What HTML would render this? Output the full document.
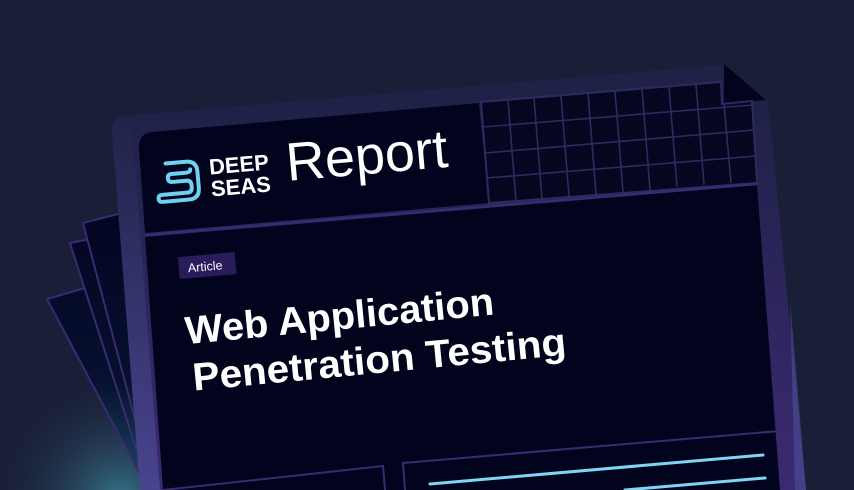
<!DOCTYPE html>
<html><head><meta charset="utf-8"><style>
html,body{margin:0;padding:0;background:#1a1f38;}
svg{display:block}
</style></head><body>
<svg width="854" height="490" viewBox="0 0 854 490" xmlns="http://www.w3.org/2000/svg">
<defs>
<radialGradient id="glow" cx="120" cy="500" r="130" gradientUnits="userSpaceOnUse">
<stop offset="0" stop-color="#3a7f93" stop-opacity="0.9"/>
<stop offset="1" stop-color="#1a1f38" stop-opacity="0"/>
</radialGradient>
<linearGradient id="paper" x1="0" y1="100" x2="0" y2="490" gradientUnits="userSpaceOnUse">
<stop offset="0" stop-color="#1f2147"/>
<stop offset="1" stop-color="#3a2a72"/>
</linearGradient>
<linearGradient id="lefte" x1="0" y1="120" x2="0" y2="490" gradientUnits="userSpaceOnUse">
<stop offset="0" stop-color="#22234a"/>
<stop offset="1" stop-color="#4e509a"/>
</linearGradient>
<linearGradient id="backp" x1="0" y1="220" x2="0" y2="490" gradientUnits="userSpaceOnUse">
<stop offset="0" stop-color="#030622"/>
<stop offset="0.6" stop-color="#071030"/>
<stop offset="1" stop-color="#1d4a62"/>
</linearGradient>
</defs>
<rect width="854" height="490" fill="#1a1f38"/>
<rect width="854" height="490" fill="url(#glow)"/>
<polygon points="47,299 85,288 150,470 143,480" fill="url(#backp)" stroke="#3a2a72" stroke-width="2"/>
<polygon points="70,243 90,239 150,460 143,470" fill="url(#backp)" stroke="#3a2a72" stroke-width="2"/>
<polygon points="83,223 122,213 150,440 143,450" fill="url(#backp)" stroke="#3a2a72" stroke-width="2"/>
<path d="M124,116 L722,65 L768,100 L806,490 L140,490 L112,132 Q111,118 124,116 Z" fill="url(#paper)"/>
<path d="M124,116 Q111,118 112,132 L140,490 L160,490 L132,128 Z" fill="url(#lefte)" opacity="0.7"/>
<polygon points="790,300 806,490 795,490" fill="#4e509a" opacity="0.6"/>
<polygon points="724,64 766,100 724,104" fill="#02041e"/>
<path d="M152,132 L479,103 L489,203 L145,233 L139,148 Q138,134 152,132 Z" fill="#02041e"/>
<g stroke="#2e2a60" stroke-width="2" fill="#04071f">
<polygon points="481,102 721,82 722,104 752,101 757,183 489,203"/>
</g>
<g stroke="#2e2a60" stroke-width="1.6">
<line x1="483" y1="127" x2="753" y2="105"/>
<line x1="485" y1="153" x2="754" y2="130"/>
<line x1="487" y1="178" x2="756" y2="156"/>
<line x1="508" y1="100" x2="516" y2="201"/>
<line x1="534" y1="98" x2="542" y2="199"/>
<line x1="561" y1="96" x2="569" y2="196"/>
<line x1="588" y1="93" x2="596" y2="194"/>
<line x1="615" y1="91" x2="623" y2="192"/>
<line x1="642" y1="89" x2="650" y2="190"/>
<line x1="669" y1="87" x2="677" y2="187"/>
<line x1="696" y1="84" x2="704" y2="185"/>
<line x1="724" y1="104" x2="731" y2="183"/>
</g>
<polygon points="145,237 757,185 780,490 163,490" fill="#02041e"/>
<line x1="145" y1="235" x2="757" y2="184" stroke="#3a2a72" stroke-width="2.5"/>
<polyline points="163,490 383,466 385,490" fill="none" stroke="#3a2a72" stroke-width="2"/>
<polyline points="405,490 403,463 779,431" fill="none" stroke="#3a2a72" stroke-width="2"/>
<line x1="430" y1="484" x2="763" y2="455" stroke="#7fd6f2" stroke-width="3" stroke-linecap="round"/>
<line x1="625" y1="490" x2="765" y2="478" stroke="#7fd6f2" stroke-width="3" stroke-linecap="round"/>
<g transform="rotate(-5 160 180)">
<path d="M167,164 H187 Q198,164 198,175 V191 Q198,202 187,202 H161 Q157,202 157,198.5 Q157,195 161,195 H186 Q191,195 191,190 V188 Q191,183 186,183 H172 Q168,183 168,179 Q168,175 172,175 H186 Q191,175 191,172" fill="none" stroke="#6fd0f0" stroke-width="4" stroke-linecap="round" stroke-linejoin="round"/>
<text x="210" y="179" font-family="Liberation Sans, sans-serif" font-weight="bold" font-size="22" fill="#fff">DEEP</text>
<text x="210" y="201" font-family="Liberation Sans, sans-serif" font-weight="bold" font-size="22" fill="#fff">SEAS</text>
<text x="287" y="192" font-family="Liberation Sans, sans-serif" font-size="54" fill="#fff">Report</text>
</g>
<g transform="rotate(-5 180 270)">
<rect x="179" y="257" width="57" height="22" fill="#2a1b5a"/>
<text x="188" y="273" font-family="Liberation Sans, sans-serif" font-size="12.5" fill="#fff">Article</text>
</g>
<g transform="rotate(-5.5 188 340)" font-family="Liberation Sans, sans-serif" font-weight="bold" font-size="39" fill="#fff">
<text x="186" y="344" textLength="310" lengthAdjust="spacingAndGlyphs">Web Application</text>
<text x="189" y="391" textLength="375" lengthAdjust="spacingAndGlyphs">Penetration Testing</text>
</g>
</svg>
</body></html>
